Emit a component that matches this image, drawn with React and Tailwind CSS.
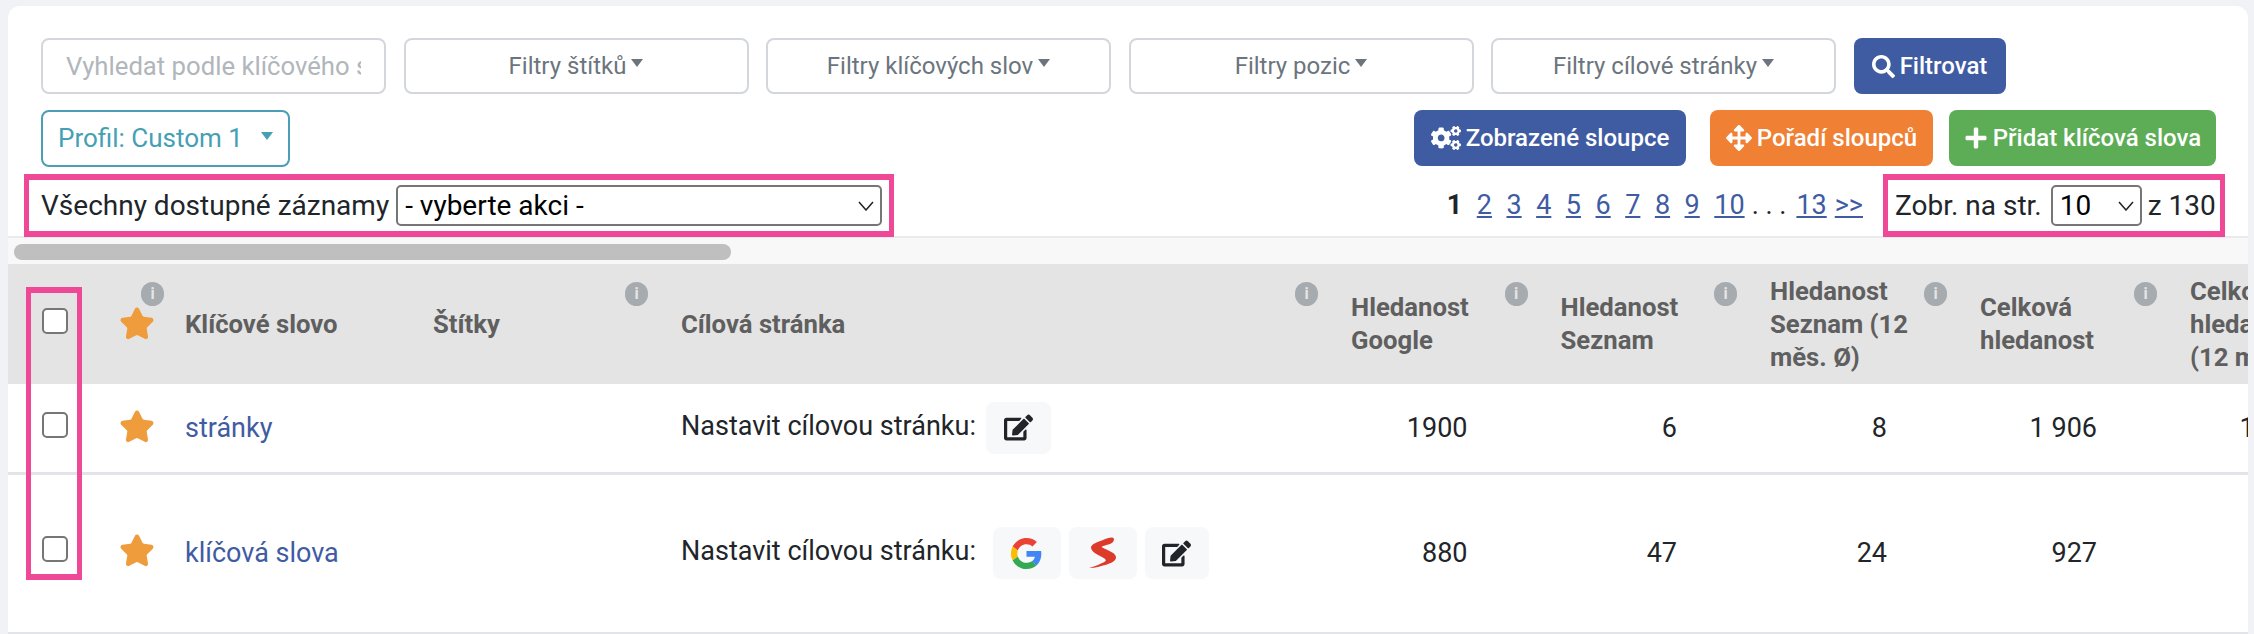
import { Star } from 'lucide-react';
import { FaArrowsAlt, FaCogs, FaEdit, FaPlus, FaSearch } from 'react-icons/fa';

const Caret = ({ className = 'border-t-[#6c757d] ml-[5px]' }) => (
    <span className={`inline-block -mt-[6px] w-0 h-0 border-x-[6.5px] border-x-transparent border-t-[8px] ${className}`} />
);

const FilterButton = ({ label }) => (
    <button className="w-[345px] h-[56px] border-2 border-[#d3d7db] rounded-lg bg-white text-[#6c757d] text-[24px] flex items-center justify-center">
        {label}
        <Caret />
    </button>
);

const ActionButton = ({ icon, label, className }) => (
    <button className={`h-[56px] rounded-lg text-white text-[24px] font-medium flex items-center justify-center gap-[5px] ${className}`}>
        {icon}
        {label}
    </button>
);

const Info = ({ className = 'right-[17px]' }) => (
    <span className={`absolute top-[18px] w-[23px] h-[24px] rounded-full bg-[#a6abaf] text-[#e4e4e4] text-[16px] font-bold leading-[24px] text-center ${className}`}>
        i
    </span>
);

const HeadCell = ({ children, info = true }) => (
    <th className="relative pl-4 pr-[20px] text-left align-middle font-bold text-[25.7px] leading-[33px] text-[#5f5f5f]">
        {children}
        {info && <Info />}
    </th>
);

const Check = ({ className = '-translate-y-[3px]' }) => (
    <input
        type="checkbox"
        className={`block mx-auto w-[26px] h-[26px] -translate-x-[2px] appearance-none bg-white border-2 border-[#767676] rounded-[5px] ${className}`}
    />
);

const RowStar = ({ className = '' }) => (
    <Star size={36} className={`block mx-auto fill-[#ee9c3c] text-[#ee9c3c] ${className}`} />
);

const IconBadge = ({ children, className = 'w-[68px]' }) => (
    <span className={`h-[52px] rounded-lg bg-[#f7f8f9] flex items-center justify-center ${className}`}>{children}</span>
);

const GoogleIcon = () => (
    <svg width="31" height="31" viewBox="0 0 48 48" className="blur-[0.4px]">
        <path fill="#EA4335" d="M24 9.5c3.54 0 6.71 1.22 9.21 3.6l6.85-6.85C35.9 2.38 30.47 0 24 0 14.62 0 6.51 5.38 2.56 13.22l7.98 6.19C12.43 13.72 17.74 9.5 24 9.5z" />
        <path fill="#4285F4" d="M46.98 24.55c0-1.57-.15-3.09-.38-4.55H24v9.02h12.94c-.58 2.96-2.26 5.48-4.78 7.18l7.73 6c4.51-4.18 7.09-10.36 7.09-17.65z" />
        <path fill="#FBBC05" d="M10.53 28.59c-.48-1.45-.76-2.99-.76-4.59s.27-3.14.76-4.59l-7.98-6.19C.92 16.46 0 20.12 0 24c0 3.88.92 7.54 2.56 10.78l7.97-6.19z" />
        <path fill="#34A853" d="M24 48c6.48 0 11.93-2.13 15.89-5.81l-7.73-6c-2.15 1.45-4.92 2.3-8.16 2.3-6.26 0-11.57-4.22-13.47-9.91l-7.98 6.19C6.51 42.62 14.62 48 24 48z" />
    </svg>
);

const SeznamIcon = () => (
    <svg width="28" height="32" viewBox="0 0 28 32" className="blur-[0.4px]">
        <path fill="#dc3a2a" d="M23 .5C26 .5 25.5 5 22 6.5C19 8 14 8.5 12.5 10C15 12 26.5 15 27 20C27.5 24.5 20 27 14 28.5C9 30 4 31.5 0 31C5 29.5 12 27 16 24.5C18 23 16 21.5 12 19.5C7 17 2 14 2 10.5C2 7 9 5 14 3C17 1.5 20 .5 23 .5Z" />
    </svg>
);

const EditIcon = () => <FaEdit size={29} className="text-[#212529]" />;

const Chevron = () => (
    <svg width="16" height="10" viewBox="0 0 16 10" fill="none" stroke="#222" strokeWidth="1.5" className="absolute right-[8px] top-[16px] pointer-events-none">
        <path d="M1 1l7 8 7-8" />
    </svg>
);

const Select = ({ value, className }) => (
    <div className={`relative ${className}`}>
        <select className="block w-full h-[41px] appearance-none border-2 border-[#767676] rounded-[5px] pl-[7px] text-[28px] leading-[34px] text-black bg-white">
            <option>{value}</option>
        </select>
        <Chevron />
    </div>
);

const pages = ['2', '3', '4', '5', '6', '7', '8', '9', '10'];

const rows = [
    { keyword: 'stránky', values: ['1900', '6', '8', '1 906', '1 908'], height: 'h-[89px]', engines: false },
    { keyword: 'klíčová slova', values: ['880', '47', '24', '927', '904'], height: 'h-[160px]', engines: true },
];

const App = () => {
    return (
        <div className="h-[634px] overflow-hidden bg-[#f0f2f5] pl-2 pr-[6px] pt-[6px] font-['Roboto',sans-serif] text-[27px] text-[#212529]">
            <div className="h-full overflow-hidden rounded-t-xl bg-white">
                <div className="h-[230px] pl-4 pr-[23px] pt-[32px]">
                    <div className="flex gap-[17.5px] pl-[17px]">
                        <div className="w-[345px] h-[56px] border-2 border-[#d3d7db] rounded-lg pl-[23px] pr-[23px]">
                            <input
                                placeholder="Vyhledat podle klíčového slova"
                                className="w-full h-full text-[25.7px] outline-none placeholder:text-[#b1b6bb]"
                            />
                        </div>
                        <FilterButton label="Filtry štítků" />
                        <FilterButton label="Filtry klíčových slov" />
                        <FilterButton label="Filtry pozic" />
                        <FilterButton label="Filtry cílové stránky" />
                        <ActionButton icon={<FaSearch size={23} />} label="Filtrovat" className="w-[152px] bg-[#3f5ca3]" />
                    </div>

                    <div className="mt-4 flex justify-between pl-[17px] pr-[9px]">
                        <button className="w-[249px] h-[57px] border-2 border-[#4a9fb5] rounded-lg pl-[15px] text-[26px] text-[#45a0b3] flex items-center">
                            Profil: Custom 1
                            <Caret className="border-t-[#45a0b3] ml-[18px]" />
                        </button>
                        <div className="flex gap-[16px]">
                            <ActionButton icon={<FaCogs size={30} />} label="Zobrazené sloupce" className="w-[272px] mr-[8px] bg-[#3f5ca3]" />
                            <ActionButton icon={<FaArrowsAlt size={26} />} label="Pořadí sloupců" className="w-[223px] bg-[#f08033]" />
                            <ActionButton icon={<FaPlus size={24} />} label="Přidat klíčová slova" className="w-[267px] bg-[#5cad55]" />
                        </div>
                    </div>

                    <div className="mt-[7px] flex items-center justify-between text-[28px]">
                        <div className="w-[870px] h-[63px] border-x-[5px] border-y-[6px] border-[#ee4897] pl-[12px] flex items-center">
                            Všechny dostupné záznamy
                            <Select value="- vyberte akci -" className="ml-[7px] w-[486px]" />
                        </div>
                        <div className="flex items-center">
                            <div className="flex gap-[14.5px] items-center text-[27px]">
                                <b className="font-bold">1</b>
                                {pages.map((page) => (
                                    <a key={page} className="text-[#3f5ca3] underline">{page}</a>
                                ))}
                                <span className="-ml-[7.5px] -mr-[4.5px]">. . .</span>
                                <a className="text-[#3f5ca3] underline">13</a>
                                <a className="-ml-[6.5px] text-[#3f5ca3] underline">&gt;&gt;</a>
                            </div>
                            <div className="ml-[20px] w-[342px] h-[63px] border-x-[5px] border-y-[6px] border-[#ee4897] pl-[7px] flex items-center whitespace-nowrap">
                                Zobr. na str.
                                <Select value="10" className="ml-[9px] w-[91px]" />
                                <span className="ml-[6px]">z 130</span>
                            </div>
                        </div>
                    </div>
                </div>

                <div className="h-[28px] border-t-2 border-[#ebebeb] bg-[#f8f8f8] pt-[6px] pl-[6px]">
                    <div className="w-[717px] h-[16px] rounded-full bg-[#bfbfbf]" />
                </div>

                <div className="relative overflow-hidden">
                    <table className="w-[2376px] table-fixed border-collapse">
                        <colgroup>
                            <col className="w-[97px]" />
                            <col className="w-[64px]" />
                            <col className="w-[248px]" />
                            <col className="w-[248px]" />
                            <col className="w-[670px]" />
                            <col className="w-[209.5px]" />
                            <col className="w-[209.5px]" />
                            <col className="w-[210px]" />
                            <col className="w-[210px]" />
                            <col className="w-[210px]" />
                        </colgroup>
                        <thead>
                            <tr className="h-[120px] bg-[#e4e4e4]">
                                <th><Check /></th>
                                <th className="relative">
                                    <RowStar />
                                    <Info className="right-[5px]" />
                                </th>
                                <HeadCell info={false}>Klíčové slovo</HeadCell>
                                <HeadCell>Štítky</HeadCell>
                                <HeadCell>Cílová stránka</HeadCell>
                                <HeadCell>Hledanost Google</HeadCell>
                                <HeadCell>Hledanost Seznam</HeadCell>
                                <HeadCell>Hledanost Seznam (12 měs. Ø)</HeadCell>
                                <HeadCell>Celková hledanost</HeadCell>
                                <HeadCell info={false}>Celková hledanost<br />(12 měs. Ø)</HeadCell>
                            </tr>
                        </thead>
                        <tbody>
                            {rows.map((row) => (
                                <tr key={row.keyword} className={`${row.height} border-b-[3px] border-[#e2e4e9]`}>
                                    <td><Check className={row.engines ? '-translate-y-[4px]' : '-translate-y-[3px]'} /></td>
                                    <td><RowStar className={row.engines ? '-translate-y-[2px]' : '-translate-y-[1px]'} /></td>
                                    <td className="pl-4 text-[#3f5ca3]">{row.keyword}</td>
                                    <td />
                                    <td className="pl-4">
                                        <div className="flex items-center">
                                            <span className="-mt-[4px]">Nastavit cílovou stránku:</span>
                                            {row.engines ? (
                                                <div className="ml-[17px] flex gap-[8px]">
                                                    <IconBadge><GoogleIcon /></IconBadge>
                                                    <IconBadge><SeznamIcon /></IconBadge>
                                                    <IconBadge className="w-[64px]"><EditIcon /></IconBadge>
                                                </div>
                                            ) : (
                                                <div className="ml-[10px]">
                                                    <IconBadge className="w-[65px]"><EditIcon /></IconBadge>
                                                </div>
                                            )}
                                        </div>
                                    </td>
                                    {row.values.map((value, index) => (
                                        <td key={index} className="pr-[77px] text-right">{value}</td>
                                    ))}
                                </tr>
                            ))}
                        </tbody>
                    </table>
                    {/* highlight over the checkbox column */}
                    <div className="absolute left-[18px] top-[23px] w-[56px] h-[293px] border-x-[5px] border-y-[6px] border-[#ee4897]" />
                </div>
            </div>
        </div>
    );
};

export default App;
